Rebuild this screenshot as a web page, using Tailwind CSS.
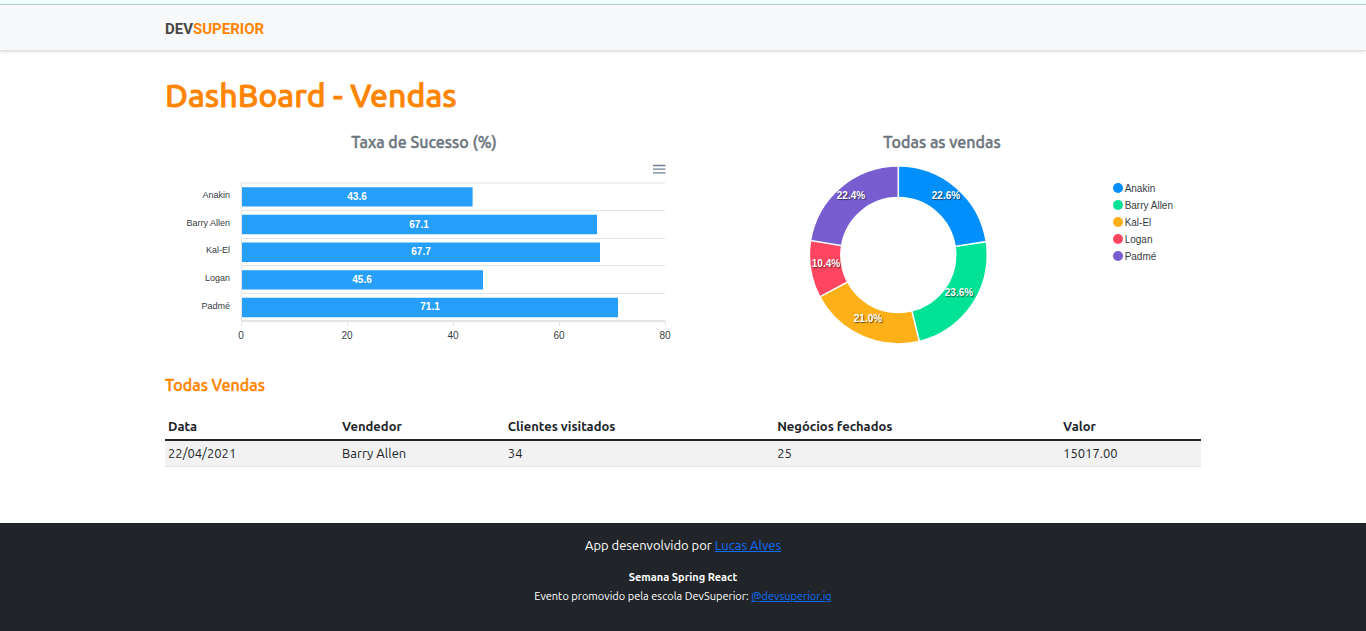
<!DOCTYPE html>
<html lang="pt-BR">
<head>
<meta charset="utf-8">
<meta name="viewport" content="width=device-width, initial-scale=1">
<title>DevSuperior - DashBoard</title>
<script src="https://cdn.jsdelivr.net/npm/@tailwindcss/browser@4"></script>
</head>
<body class="flex min-h-screen flex-col bg-white font-['Ubuntu','Noto_Sans',sans-serif] text-[13px] leading-5 text-[#212529]">
  <div class="h-[5px] border-b border-[#b4cbc9] bg-[#f0ffff]"></div>
  <header class="border-b border-[#dee2e6] bg-[#f8f9fa] shadow-sm">
    <nav class="mx-auto flex h-[45px] max-w-[1056px] items-center px-[10px]">
      <a href="#" class="pt-0.5 font-['Roboto',sans-serif] text-[15px] font-bold text-[#484848]">DEV<span class="text-[#ff8400]">SUPERIOR</span></a>
    </nav>
  </header>

  <main class="mx-auto w-full max-w-[1056px] grow px-[10px] pt-6">
    <h1 class="text-[32px] leading-10 font-medium text-[#ff8400] [-webkit-text-stroke:0.025em]">DashBoard - Vendas</h1>

    <div class="grid grid-cols-2 pt-[17px]">
      <section class="relative">
        <h2 class="text-center text-base leading-5 font-medium text-[#6c757d] [-webkit-text-stroke:0.025em]">Taxa de Sucesso (%)</h2>
        <button type="button" aria-label="Menu do gráfico" class="absolute top-7 right-3 flex size-6 items-center justify-center">
          <svg class="size-6" viewBox="0 0 24 24" fill="none" stroke="#6e8192" stroke-width="1.3"><path d="M6 5.500h12.500M6 9.200h12.500M6 12.900h12.500"/></svg>
        </button>
        <svg class="block w-full font-['Liberation_Sans',sans-serif]" viewBox="0 0 518 202" role="img" aria-label="Taxa de Sucesso (%)">
          <g stroke="#e5e5e5">
            <path d="M77 31H500" stroke-width="2" stroke="#f0f0f0"/>
            <path d="M77 58.500H500M77 86.500H500M77 113.500H500M77 141.500H500M76.500 30V174M182.500 169v5M288.500 169v5M394.500 169v5M500.500 169v5"/>
            <path d="M77 169H500" stroke-width="2"/>
          </g>
          <g fill="#269ffb">
            <path d="M77 35.200h230.600v19.400H77zM77 62.800h355v19.400H77zM77 90.500h358v19.400H77zM77 118.200h241v19.400H77zM77 145.800h376v19.400H77z"/>
          </g>
          <g fill="#373d3f" font-size="9" text-anchor="end">
            <text x="65" y="46">Anakin</text>
            <text x="65" y="74">Barry Allen</text>
            <text x="65" y="101">Kal-El</text>
            <text x="65" y="129">Logan</text>
            <text x="65" y="157">Padmé</text>
          </g>
          <g fill="#fff" font-size="10" font-weight="bold" text-anchor="middle">
            <text x="192" y="48">43.6</text>
            <text x="254" y="76">67.1</text>
            <text x="256" y="103">67.7</text>
            <text x="197" y="131">45.6</text>
            <text x="265" y="158">71.1</text>
          </g>
          <g fill="#373d3f" font-size="10" text-anchor="middle">
            <text x="76" y="187">0</text>
            <text x="182" y="187">20</text>
            <text x="288" y="187">40</text>
            <text x="394" y="187">60</text>
            <text x="500" y="187">80</text>
          </g>
        </svg>
      </section>

      <section>
        <h2 class="text-center text-base leading-5 font-medium text-[#6c757d] [-webkit-text-stroke:0.025em]">Todas as vendas</h2>
        <div class="flex items-start justify-between pt-2.5 pr-7 pl-[117px] font-['Liberation_Sans',sans-serif]">
          <svg class="h-[186px] w-[196px] shrink-0" viewBox="0 0 196 186" role="img" aria-label="Todas as vendas">
            <g fill="none" stroke-width="30" transform="rotate(-90 98.300 93)">
              <circle cx="98.300" cy="93" r="73.200" pathLength="100" stroke="#008ffb" stroke-dasharray="22.600 100"/>
              <circle cx="98.300" cy="93" r="73.200" pathLength="100" stroke="#00e396" stroke-dasharray="23.600 100" stroke-dashoffset="-22.600"/>
              <circle cx="98.300" cy="93" r="73.200" pathLength="100" stroke="#feb019" stroke-dasharray="21 100" stroke-dashoffset="-46.200"/>
              <circle cx="98.300" cy="93" r="73.200" pathLength="100" stroke="#ff4560" stroke-dasharray="10.400 100" stroke-dashoffset="-67.200"/>
              <circle cx="98.300" cy="93" r="73.200" pathLength="100" stroke="#775dd0" stroke-dasharray="22.400 100" stroke-dashoffset="-77.600"/>
            </g>
            <g stroke="#fff" stroke-width="1.600">
              <path d="M98.300 36V4"/>
              <path d="M98.300 36V4" transform="rotate(81.360 98.300 93)"/>
              <path d="M98.300 36V4" transform="rotate(166.320 98.300 93)"/>
              <path d="M98.300 36V4" transform="rotate(241.920 98.300 93)"/>
              <path d="M98.300 36V4" transform="rotate(279.360 98.300 93)"/>
            </g>
            <g class="[text-shadow:1px_1px_1px_rgb(0_0_0/0.55)]" fill="#fff" font-size="10" font-weight="bold" text-anchor="middle">
              <text x="146" y="37">22.6%</text>
              <text x="159" y="134">23.6%</text>
              <text x="68" y="160">21.0%</text>
              <text x="26" y="105">10.4%</text>
              <text x="51" y="37">22.4%</text>
            </g>
          </svg>
          <ul class="pt-[18px] text-[10px] leading-[17px] text-[#373d3f]">
            <li class="flex items-center gap-0.5"><span class="mb-0.5 size-2.5 rounded-full bg-[#008ffb]"></span>Anakin</li>
            <li class="flex items-center gap-0.5"><span class="mb-0.5 size-2.5 rounded-full bg-[#00e396]"></span>Barry Allen</li>
            <li class="flex items-center gap-0.5"><span class="mb-0.5 size-2.5 rounded-full bg-[#feb019]"></span>Kal-El</li>
            <li class="flex items-center gap-0.5"><span class="mb-0.5 size-2.5 rounded-full bg-[#ff4560]"></span>Logan</li>
            <li class="flex items-center gap-0.5"><span class="mb-0.5 size-2.5 rounded-full bg-[#775dd0]"></span>Padmé</li>
          </ul>
        </div>
      </section>
    </div>

    <h2 class="pt-[21px] text-base leading-5 font-medium text-[#ff8400] [-webkit-text-stroke:0.025em]">Todas Vendas</h2>
    <table class="mt-[18px] mb-14 w-full table-fixed border-collapse text-left">
      <colgroup><col class="w-[16.8%]"><col class="w-[16%]"><col class="w-[26%]"><col class="w-[27.6%]"><col class="w-[13.6%]"></colgroup>
      <thead>
        <tr class="border-b-2 border-[#212529]">
          <th scope="col" class="p-[3px]">Data</th>
          <th scope="col" class="p-[3px]">Vendedor</th>
          <th scope="col" class="p-[3px]">Clientes visitados</th>
          <th scope="col" class="p-[3px]">Negócios fechados</th>
          <th scope="col" class="p-[3px]">Valor</th>
        </tr>
      </thead>
      <tbody class="leading-[19px]">
        <tr class="border-b border-[#dee2e6] bg-[#f2f2f2]">
          <td class="p-[3px]">22/04/2021</td>
          <td class="p-[3px]">Barry Allen</td>
          <td class="p-[3px]">34</td>
          <td class="p-[3px]">25</td>
          <td class="p-[3px]">15017.00</td>
        </tr>
      </tbody>
    </table>
  </main>

  <footer class="bg-[#212529] px-[10px] pt-3 pb-[25px] text-center text-white">
    <p>App desenvolvido por <a href="#" class="text-[#0d6efd] underline">Lucas Alves</a></p>
    <p class="pt-[13px] text-[11px] leading-[19px] font-bold">Semana Spring React</p>
    <p class="text-[11px] leading-[19px]">Evento promovido pela escola DevSuperior: <a href="#" class="text-[#0d6efd] underline">@devsuperior.ig</a></p>
  </footer>
</body>
</html>
